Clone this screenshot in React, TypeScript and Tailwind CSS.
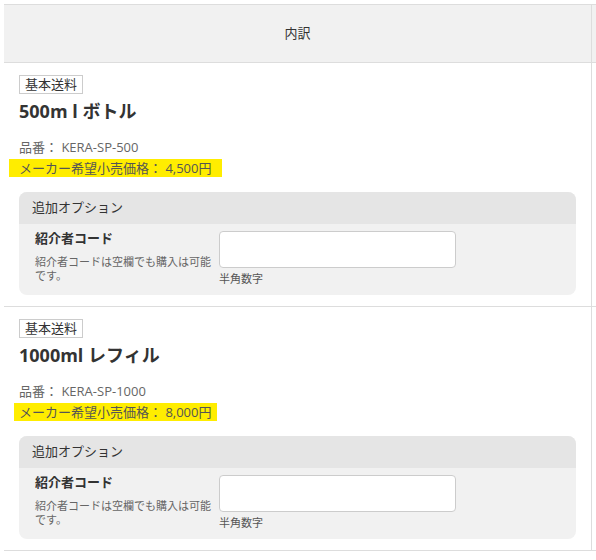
import React from 'react';

const products = [
  { name: '500m l ボトル', code: 'KERA-SP-500', price: '4,500円', hlPad: 'px-[10px] ml-[-10px]' },
  { name: '1000ml レフィル', code: 'KERA-SP-1000', price: '8,000円', hlPad: 'px-[5px] ml-[-5px]' },
];

const App: React.FC = () => {
  return (
    <div className="w-[596px] h-[560px] overflow-hidden bg-white pt-[4px] pl-[4px] text-[#333] font-['Open_Sans','Noto_Sans_CJK_JP',sans-serif]">
      <div className="w-[800px]">
        {/* Header */}
        <div className="flex border-t border-b border-[#ddd] bg-[#f1f1f1] h-[59px]">
          <div className="w-[588px] border-r border-[#ddd] flex items-center justify-center text-[13px] text-[#333]">
            内訳
          </div>
          <div className="flex-1" />
        </div>

        {products.map((p, i) => (
          <div key={i} className="flex border-b border-[#ddd]">
            <div className="w-[588px] border-r border-[#ddd] pl-[15px] pr-[15px] pt-[12px] pb-[11px]">
              <div className="w-fit border border-[#ccc] px-[5px] h-[19px] leading-[17px] text-[13px] text-[#333]">
                基本送料
              </div>
              <h3 className="mt-[5px] text-[18px] leading-[24px] font-bold text-[#333]">{p.name}</h3>
              <p className="mt-[15px] text-[13px] leading-[18px] text-[#666]">品番： {p.code}</p>
              <div
                className={`mt-[3px] w-fit bg-[#ffed00] text-[13px] leading-[18px] text-[#555] ${p.hlPad}`}
              >
                メーカー希望小売価格： {p.price}
              </div>

              {/* Option box */}
              <div className="mt-[15px] w-[557px] rounded-[8px] overflow-hidden bg-[#f1f1f1]">
                <div className="h-[32px] bg-[#e5e5e5] px-[13px] flex items-center text-[13px] text-[#333]">
                  追加オプション
                </div>
                <div className="flex pl-[16px] pt-[5px] pb-[9px]">
                  <div className="w-[184px] pr-[4px]">
                    <div className="text-[13px] leading-[18px] font-bold text-[#333]">紹介者コード</div>
                    <div className="mt-[8px] text-[11px] leading-[13.5px] text-[#666]">
                      紹介者コードは空欄でも購入は可能です。
                    </div>
                  </div>
                  <div className="pt-[2px]">
                    <input
                      type="text"
                      className="block w-[237px] h-[37px] bg-white border border-[#ccc] rounded-[4px] outline-none"
                    />
                    <div className="mt-[4px] text-[11px] leading-[14px] text-[#555]">半角数字</div>
                  </div>
                </div>
              </div>
            </div>
            <div className="flex-1" />
          </div>
        ))}
      </div>
    </div>
  );
};

export default App;
